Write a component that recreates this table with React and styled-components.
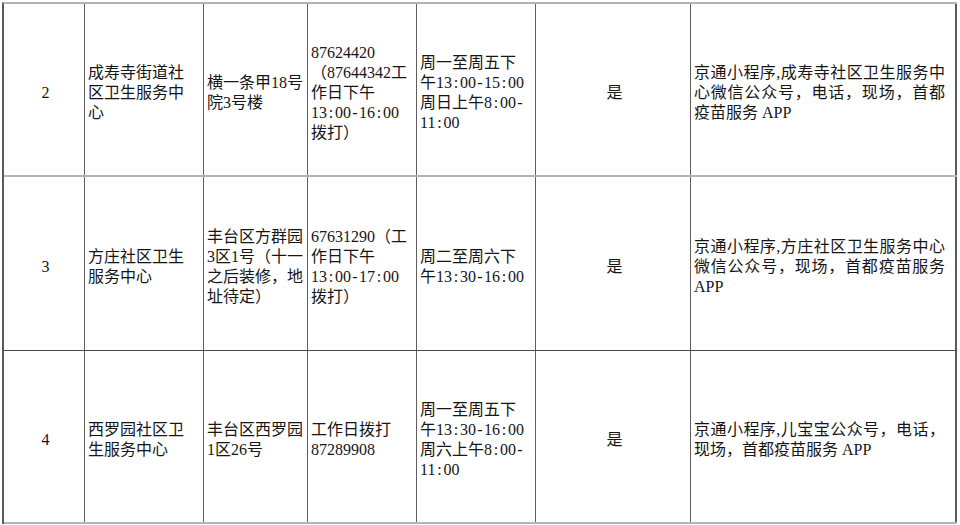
import React from 'react';
import styled, { createGlobalStyle } from 'styled-components';

const GlobalStyle = createGlobalStyle`
	html, body {
		margin: 0;
		padding: 0;
		background: #ffffff;
	}
	body {
		font-family: 'Liberation Serif', 'Noto Sans CJK SC', serif;
		color: #161616;
	}
`;

const Page = styled.div`
	width: 960px;
	height: 525px;
	overflow: hidden;
	padding: 2px 0 0 2px;
	box-sizing: border-box;
	background: #fff;
`;

const Table = styled.div`
	display: flex;
	flex-direction: column;
	width: 955px;
	border-top: 2px solid #b4b4b4;
	border-left: 2px solid #5a5a5a;
	box-sizing: border-box;
`;

const Row = styled.div`
	display: grid;
	grid-template-columns: 81px 119px 104px 109px 119px 155px 266px;
	height: ${(p) => p.$height}px;
	border-bottom: ${(p) => p.$border};
	box-sizing: border-box;
`;

const Cell = styled.div`
	display: flex;
	flex-direction: column;
	justify-content: center;
	align-items: ${(p) => (p.$center ? 'center' : 'stretch')};
	padding: ${(p) => (p.$wide ? '6px 10px 0 3px' : '6px 0 0 3px')};
	border-right: ${(p) => (p.$last ? '2px solid #5a5a5a' : '1px solid #5e5e5e')};
	box-sizing: border-box;
	font-size: 16px;
	line-height: 20px;
	min-width: 0;
`;

const Line = styled.span`
	display: block;
	white-space: nowrap;
	text-align: left;
	text-align-last: ${(p) => (p.$justify ? 'justify' : 'auto')};
`;

// colon and hyphen are half-width (8px) in the original song-style font
const Sep = styled.span`
	display: inline-block;
	width: 8px;
	text-align: center;
`;

const rows = [
	{
		no: '2',
		height: 173,
		border: '2px solid #b4b4b4',
		name: ['成寿寺街道社', '区卫生服务中', '心'],
		addr: ['横一条甲18号', '院3号楼'],
		phone: ['87624420', '（87644342工', '作日下午', '13:00-16:00', '拨打）'],
		hours: ['周一至周五下', '午13:00-15:00', '周日上午8:00-', '11:00'],
		online: '是',
		channels: ['京通小程序,成寿寺社区卫生服务中', '心微信公众号，电话，现场，首都', '疫苗服务 APP'],
	},
	{
		no: '3',
		height: 174,
		border: '1px solid #4a4a4a',
		name: ['方庄社区卫生', '服务中心'],
		addr: ['丰台区方群园', '3区1号（十一', '之后装修，地', '址待定）'],
		phone: ['67631290（工', '作日下午', '13:00-17:00', '拨打）'],
		hours: ['周二至周六下', '午13:30-16:00'],
		online: '是',
		channels: ['京通小程序,方庄社区卫生服务中心', '微信公众号，现场，首都疫苗服务', 'APP'],
	},
	{
		no: '4',
		height: 173,
		border: '2px solid #b4b4b4',
		name: ['西罗园社区卫', '生服务中心'],
		addr: ['丰台区西罗园', '1区26号'],
		phone: ['工作日拨打', '87289908'],
		hours: ['周一至周五下', '午13:30-16:00', '周六上午8:00-', '11:00'],
		online: '是',
		channels: ['京通小程序,儿宝宝公众号，电话，', '现场，首都疫苗服务 APP'],
	},
];

const renderText = (text) =>
	text.split(/([:-])/).map((part, i) =>
		part === ':' || part === '-' ? <Sep key={i}>{part}</Sep> : part
	);

const Lines = ({ items, justify }) =>
	items.map((text, i) => (
		<Line key={i} $justify={justify && i < items.length - 1}>
			{renderText(text)}
		</Line>
	));

export default function App() {
	return (
		<>
			<GlobalStyle />
			<Page>
				<Table>
					{rows.map((row) => (
						<Row key={row.no} $height={row.height} $border={row.border}>
							<Cell $center>{row.no}</Cell>
							<Cell>
								<Lines items={row.name} />
							</Cell>
							<Cell>
								<Lines items={row.addr} />
							</Cell>
							<Cell>
								<Lines items={row.phone} />
							</Cell>
							<Cell>
								<Lines items={row.hours} />
							</Cell>
							<Cell $center>{row.online}</Cell>
							<Cell $last $wide>
								<Lines items={row.channels} justify />
							</Cell>
						</Row>
					))}
				</Table>
			</Page>
		</>
	);
}
